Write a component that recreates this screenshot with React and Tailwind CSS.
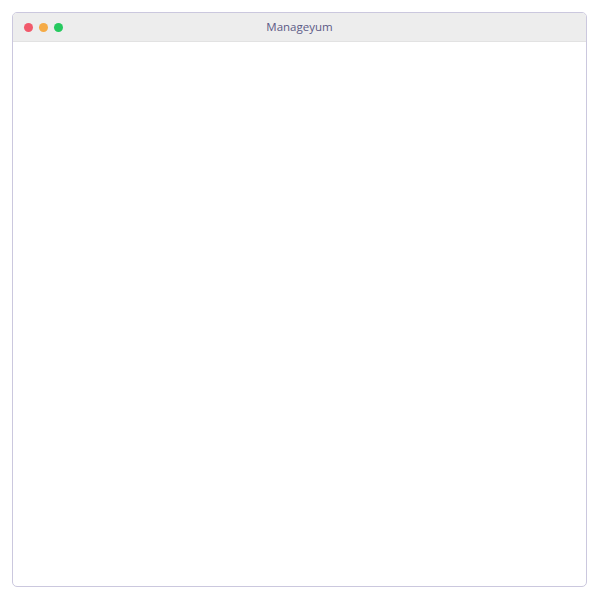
export default function App() {
  return (
    <div className="w-[600px] h-[600px] bg-white pl-3 pt-3">
      <div className="flex h-[575px] w-[575px] flex-col overflow-hidden rounded-[5px] border border-[#cbc8de] bg-white">
        <div className="relative flex h-[29px] items-center border-b border-[#e2e2e2] bg-[#ededed] px-[11px]">
          <div className="flex gap-[6px]">
            <span className="h-[9px] w-[9px] rounded-full bg-[#f15a6b]" />
            <span className="h-[9px] w-[9px] rounded-full bg-[#f5ab46]" />
            <span className="h-[9px] w-[9px] rounded-full bg-[#26c95f]" />
          </div>
          <div className="absolute inset-0 flex items-center justify-center text-[11.5px] text-[#5c5a86] font-['Open_Sans',sans-serif]">
            Manageyum
          </div>
        </div>
        <div className="flex-1" />
      </div>
    </div>
  );
}
